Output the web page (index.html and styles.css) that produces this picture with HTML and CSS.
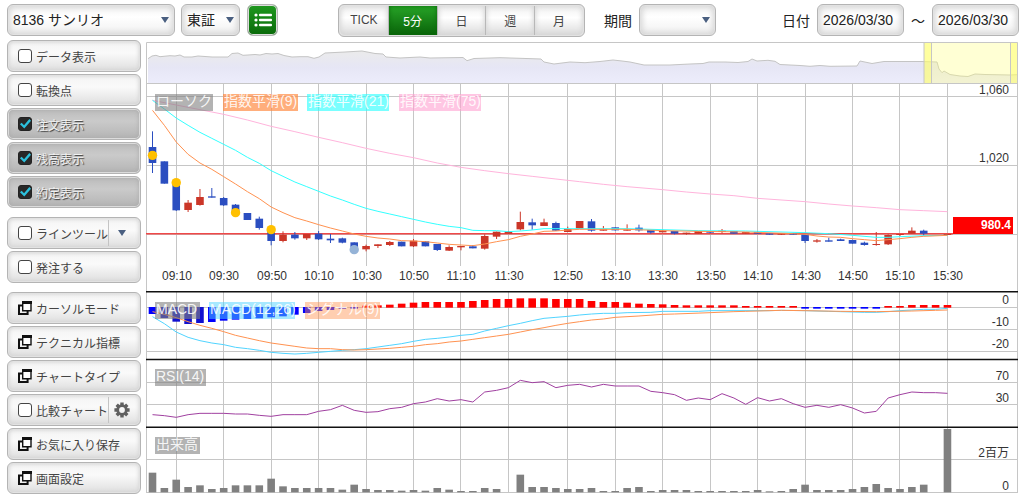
FILE: index.html
```html
<!DOCTYPE html>
<html lang="ja">
<head>
<meta charset="utf-8">
<meta name="viewport" content="width=device-width, initial-scale=1">
<title>8136 サンリオ チャート</title>
<link rel="stylesheet" href="styles.css">
</head>
<body>
<svg class="sprite" aria-hidden="true">
  <symbol id="windows" viewBox="0 0 14 14">
    <path d="M4.7 1h8.3v8.7H4.7z" fill="#fff" stroke="#111" stroke-width="1.4"/>
    <path d="M4 0h10v3H4z" fill="#111"/>
    <path d="M4 4.4H1V13h8.6V10" fill="none" stroke="#111" stroke-width="2"/>
  </symbol>
</svg>
<header class="toolbar">
  <span class="picker picker-issue"><select aria-label="銘柄"><option>8136 サンリオ</option></select></span>
  <span class="picker picker-market"><select aria-label="市場"><option>東証</option></select></span>
  <button class="list-button" type="button" aria-label="銘柄一覧">
    <svg viewBox="0 0 18 14" width="18" height="14" fill="#fff"><circle cx="2" cy="2" r="1.6"/><circle cx="2" cy="7" r="1.6"/><circle cx="2" cy="12" r="1.6"/><rect x="5" y="0.8" width="13" height="2.5" rx="1"/><rect x="5" y="5.8" width="13" height="2.5" rx="1"/><rect x="5" y="10.8" width="13" height="2.5" rx="1"/></svg>
  </button>
  <div class="periods">
    <button type="button">TICK</button>
    <button type="button" class="current">5分</button>
    <button type="button">日</button>
    <button type="button">週</button>
    <button type="button">月</button>
  </div>
  <label class="field-label" for="span">期間</label>
  <span class="picker picker-span"><select id="span"><option></option></select></span>
  <div class="dates">
    <label for="from">日付</label>
    <input id="from" type="text" value="2026/03/30">
    <span>～</span>
    <input type="text" aria-label="終了日" value="2026/03/30">
  </div>
</header>
<main class="workspace">
  <nav class="tools">
    <div class="tool-group">
      <label class="tool"><input type="checkbox">データ表示</label>
      <label class="tool"><input type="checkbox">転換点</label>
      <label class="tool on"><input type="checkbox" checked>注文表示</label>
      <label class="tool on"><input type="checkbox" checked>残高表示</label>
      <label class="tool on"><input type="checkbox" checked>約定表示</label>
    </div>
    <div class="tool-group">
      <div class="tool"><label><input type="checkbox">ラインツール</label><button class="more" type="button" aria-label="ラインツールメニュー"><svg width="8" height="6" viewBox="0 0 8 6"><path d="M0 0h8L4 6z" fill="#4a5f80"/></svg></button></div>
      <label class="tool"><input type="checkbox">発注する</label>
    </div>
    <div class="tool-group">
      <button class="tool" type="button"><svg class="icon"><use href="#windows"/></svg>カーソルモード</button>
      <button class="tool" type="button"><svg class="icon"><use href="#windows"/></svg>テクニカル指標</button>
      <button class="tool" type="button"><svg class="icon"><use href="#windows"/></svg>チャートタイプ</button>
      <div class="tool"><label><input type="checkbox">比較チャート</label><button class="more" type="button" aria-label="比較チャート設定"><svg width="16" height="16" viewBox="-8 -8 16 16"><g stroke="#606060" stroke-width="3.4"><path d="M0-7.6V-4M0 7.6V4M-7.6 0H-4M7.6 0H4M-5.3-5.3L-3-3M5.3 5.3L3 3M-5.3 5.3L-3 3M5.3-5.3L3-3"/></g><circle r="4.3" fill="none" stroke="#606060" stroke-width="2.8"/></svg></button></div>
      <button class="tool" type="button"><svg class="icon"><use href="#windows"/></svg>お気に入り保存</button>
      <button class="tool" type="button"><svg class="icon"><use href="#windows"/></svg>画面設定</button>
    </div>
  </nav>
  <svg id="chart" class="chart" viewBox="145 40 874 455" role="img" aria-label="株価チャート"></svg>
</main>
<script src="chart.js"></script>
</body>
</html>
```
FILE: styles.css
```css
* { box-sizing: border-box; }

body {
  margin: 0;
  padding: 4px 5px 4px 7px;
  background: #fff;
  color: #222;
  font-family: "Liberation Sans", "Noto Sans CJK JP", sans-serif;
  font-size: 14px;
}

button, input, select { font: inherit; color: inherit; }
button { cursor: pointer; }
.sprite { position: absolute; width: 0; height: 0; }

.toolbar { display: flex; align-items: center; height: 32px; margin-bottom: 4px; }

.picker { position: relative; margin-right: 6px; }
.picker::after {
  content: "";
  position: absolute;
  right: 6px;
  top: 13px;
  border: 4px solid transparent;
  border-top: 6px solid #4a5f80;
  border-bottom: 0;
  pointer-events: none;
}
.picker select, .dates input {
  appearance: none;
  width: 100%;
  height: 32px;
  padding: 0 5px;
  border: 1px solid #b4b4b4;
  border-radius: 6px;
  outline: 0;
  background: linear-gradient(#f2f2f2, #fff 40%, #f0f0f0);
  box-shadow: inset 0 0 0 1px #e2e2e2, inset 0 0 6px 2px #d2d2d2;
}
.picker-issue { width: 168px; }
.picker-market { width: 59px; margin-right: 7px; }
.picker-span { width: 77px; }

.list-button {
  display: flex;
  align-items: center;
  justify-content: center;
  width: 31px;
  height: 32px;
  margin-right: 60px;
  padding: 0;
  border: 1px solid #b4b4b4;
  border-radius: 6px;
  background: linear-gradient(#1f981f, #0a6a0a);
  box-shadow: inset 0 0 0 1px #ddd;
}

.periods {
  display: flex;
  width: 247px;
  height: 33px;
  margin-right: 19px;
  padding: 1px;
  border: 1px solid #b4b4b4;
  border-radius: 6px;
  background: #e2e2e2;
}
.periods button {
  flex: 1;
  padding: 0;
  border: 0;
  border-right: 1px solid #b8b8b8;
  background: linear-gradient(#f0f0f0, #fff 40%, #dcdcdc);
  box-shadow: inset 0 0 5px 1px #d6d6d6;
  color: #444;
  font-size: 12px;
}
.periods button:first-child { border-radius: 5px 0 0 5px; }
.periods button:last-child { border-right: 0; border-radius: 0 5px 5px 0; }
.periods .current {
  background: linear-gradient(#27a327, #096309);
  box-shadow: inset 0 0 4px #0a6a0a;
  color: #fff;
}

.field-label { margin-right: 7px; }
.dates { display: flex; align-items: center; gap: 7px; margin-left: auto; }
.dates input { width: 87px; }

.workspace { display: grid; grid-template-columns: 134px 1fr; gap: 4px; align-items: start; }
.tools { display: grid; gap: 9px; }
.tool-group { display: grid; gap: 2px; }

.tool {
  display: flex;
  align-items: center;
  width: 100%;
  height: 32px;
  padding: 0 0 0 10px;
  border: 1px solid #b4b4b4;
  border-radius: 6px;
  background: linear-gradient(#f4f4f4, #fafafa 40%, #dedede);
  box-shadow: inset 0 0 0 1px #e2e2e2, inset 0 0 4px 1px #d2d2d2;
  color: #444;
  font-size: 12px;
  text-align: left;
  white-space: nowrap;
}
.tool.on {
  background: linear-gradient(#bcbcbc, #cacaca 40%, #b4b4b4);
  box-shadow: inset 0 0 0 1px #dcdcdc, inset 0 0 4px 1px #aaa;
  color: #f2f2f2;
  text-shadow: 1px 1px 1px #333;
}
.tool label { display: flex; align-items: center; }
.tool input {
  appearance: none;
  flex: none;
  width: 14px;
  height: 14px;
  margin: 0 4px 0 0;
  border: 1px solid #444;
  border-radius: 3px;
  background: #fff;
}
.tool input:checked { border-color: #222; background: #282828; }
.tool input:checked::after {
  content: "";
  display: block;
  width: 12px;
  height: 12px;
  background: #2cc0dc;
  clip-path: polygon(8% 52%, 22% 40%, 42% 60%, 86% 8%, 100% 22%, 44% 88%);
}
.icon { flex: none; width: 14px; height: 14px; margin-right: 4px; }
.more {
  display: flex;
  align-items: center;
  justify-content: center;
  flex: 1;
  height: 26px;
  margin-left: auto;
  padding: 0 6px 0 0;
  border: 0;
  border-left: 1px solid #c4c4c4;
  background: none;
}
.tool label + .more { max-width: 32px; }

.chart { display: block; width: 100%; height: auto; }
.chart text { fill: #333; font-size: 12px; }
.chart .end { text-anchor: end; }
.chart .middle { text-anchor: middle; }
.chart .grid { stroke: #c6c6c6; fill: none; }
.chart .split { stroke: #111; stroke-width: 1.5; }
.chart .line { fill: none; stroke-width: 1; }
.chart .legend { fill: #fff; fill-opacity: 0.9; font-size: 14px; }
.chart .price { fill: #fff; font-size: 12px; font-weight: bold; }
```
FILE: chart.js
```js
const svg = document.getElementById("chart");
const NS = "http://www.w3.org/2000/svg";

function add(tag, attrs, text) {
  const el = document.createElementNS(NS, tag);
  for (const key in attrs) el.setAttribute(key, attrs[key]);
  if (text) el.textContent = text;
  svg.appendChild(el);
  return el;
}
const X = i => 152.5 + i * 11.865;
const priceY = v => 85 + v / 3;
const studyY = v => 285 + v / 3;
const grid = d => add("path", { d, class: "grid" });

// Overview strip
const overview = "148,58.7 152,56 156,55.3 160,56.7 170,55.7 175,56 180,55 184,57 192,57 198,56 212,57 228,57 232,53.5 238,53 243,55.3 248,55 255,54.5 260,55 266,53.5 272,54 278,53.5 284,55.5 292,57 300,56.7 308,56.7 314,58.3 319,57 325,53 345,52 362,51 375,53.5 383,54 386,57 400,58 420,57 430,58 463,57.5 467,60.7 474,58.5 500,57.7 520,58.3 541,59 544,62 554,64 570,62 585,62.7 600,61.5 613,60 622,61 630,62 644,65 670,65 690,64 703,63.5 709,62 725,62 738,62.5 748,61.5 752,59 757,61 768,60.3 775,61.3 780,64.5 800,65.5 810,66.3 820,65.5 830,66.3 857,66 860,61 872,63.5 884,61.5 900,61.5 922,61.5 937,62 939,69 942,72.7 944,71 950,74.5 960,76 968,76.5 975,74 985,74.5 1010,75 1017,74.7";
const defs = add("defs", {});
defs.innerHTML = '<linearGradient id="haze" x1="0" y1="0" x2="0" y2="1"><stop offset="0" stop-color="#ebebeb"/><stop offset=".5" stop-color="#e6e6f5"/><stop offset="1" stop-color="#ededfc"/></linearGradient>';
add("polygon", { points: "148,83.5 " + overview + " 1017,83.5", fill: "url(#haze)" });
add("polyline", { points: overview, fill: "none", stroke: "#c4c4c4" });
add("rect", { x: 924, y: 42, width: 93, height: 41, fill: "#ffff80", "fill-opacity": 0.34 });
add("rect", { x: 924, y: 42, width: 7, height: 41, fill: "#ffff60", "fill-opacity": 0.45 });
add("rect", { x: 1011, y: 42, width: 7, height: 41, fill: "#ffff60", "fill-opacity": 0.45 });
grid("M924 42V83M931.5 42V83M1010.5 42V83");
grid("M146.5 493V42.5H1017.5V493");
grid("M146 83.5H1018");

// Grid and time axis
const ticks = [[2, "09:10"], [6, "09:30"], [10, "09:50"], [14, "10:10"], [18, "10:30"], [22, "10:50"], [26, "11:10"], [30, "11:30"], [35, "12:50"], [39, "13:10"], [43, "13:30"], [47, "13:50"], [51, "14:10"], [55, "14:30"], [59, "14:50"], [63, "15:10"], [67, "15:30"]];
for (const [i, label] of ticks) {
  const x = Math.floor(X(i)) + 0.5;
  grid(`M${x} 84V266M${x} 292V493`);
  add("text", { x: x + 0.5, y: 280, class: "middle" }, label);
}
for (const y of [96.5, 165.5, 234.5, 307.5, 329.5, 351.5, 382.5, 404.5, 459.5, 492.5]) grid(`M146 ${y}H1018`);
add("path", { d: "M146 233.8H953", stroke: "#f04848", "stroke-width": 1.6 });

// Candles: index, colour, high, body top, body bottom, low
const candles = [
  [0,"b",139,186,234,264],[1,"b",229,229,296,296],[2,"b",297,297,376,378],[3,"r",345,353,375,381],[4,"r",312,336,360,362],[5,"b",309,334,338,338],[6,"b",336,339,361,363],[7,"b",357,359,384,384],[8,"b",384,384,405,405],[9,"b",395,401,429,434],
  [10,"b",440,440,468,481],[11,"r",439,449,468,472],[12,"b",441,449,460,464],[13,"r",447,447,460,465],[14,"b",438,446,463,465],[15,"b",447,461,466,474],[16,"b",458,460,473,475],[17,"b",472,472,487,487],[18,"r",479,483,493,499],[19,"r",478,478,483,489],
  [20,"r",468,471,480,483],[21,"b",470,470,484,484],[22,"r",462,467,484,486],[23,"b",469,469,484,484],[24,"b",477,477,495,498],[25,"r",481,486,497,498],[26,"r",483,483,487,496],[27,"b",480,484,490,490],[28,"r",448,453,491,494],[29,"r",440,440,455,462],
  [30,"r",438,439,446,446],[31,"r",380,411,433,436],[32,"b",401,412,421,434],[33,"r",401,412,423,423],[34,"b",410,414,437,438],[35,"r",425,432,441,441],[36,"r",408,408,431,431],[37,"b",402,409,437,440],[38,"r",423,432,437,437],[39,"b",427,427,436,437],
  [40,"r",418,433,437,437],[41,"b",419,428,436,440],[42,"b",435,435,443,446],[43,"r",434,437,442,442],[44,"b",438,438,446,448],[45,"r",443,443,447,449],[46,"r",438,438,446,446],[47,"b",438,438,443,445],[48,"r",432,437,441,445],[49,"b",438,438,446,446],
  [50,"r",441,441,446,446],[51,"b",438,441,446,446],[52,"b",445,445,449,449],[53,"r",445,445,449,450],[54,"b",445,445,449,449],[55,"b",448,448,468,474],[56,"r",462,466,470,473],[57,"b",458,466,470,470],[58,"b",461,463,468,468],[59,"b",464,465,476,476],
  [60,"b",470,473,480,482],[61,"r",441,477,480,482],[62,"r",448,450,478,480],[63,"r",447,447,450,453],[64,"r",427,437,446,446],[65,"b",434,437,446,452],[67,"r",447,447,450,450]
];
for (const [i, c, high, top, bottom, low] of candles) {
  const color = c === "b" ? "#2b4ec0" : "#cb3628";
  add("path", { d: `M${X(i)} ${priceY(high)}V${priceY(low)}`, stroke: color });
  add("rect", { x: X(i) - 3.8, y: priceY(top), width: 7.6, height: (bottom - top) / 3, fill: color });
}

// Each line is a flat list of index, value pairs
function line(pairs, y, stroke) {
  let points = "";
  for (let k = 0; k < pairs.length; k += 2) points += `${X(pairs[k])},${y(pairs[k + 1])} `;
  add("polyline", { points, class: "line", stroke });
}
const run = values => values.flatMap((v, i) => [i, v]);

line([0,46,2,60,4,74,6,88,8,105,10,124,12,140,14,157,16,173,18,190,20,205,22,218,24,234,26,247,28,257,30,266,32,274,34,282,36,290,38,298,40,305,43,314,45,321,47,327,49,332,51,340,55,350,57,357,59,363,61,368,63,374,65,377,67,380], priceY, "#ffb4dc");
line(run([46,72,99,121,142,160,178,196,217,235,257,274,291,305,319,333,345,358,370,379,387,395,403,411,418,424,428,436,437,437,440,438,435,431,431]).concat([40,431,46,437,50,438,55,443,57,446,59,451,61,457,62,457,63,455,65,452,67,451]), priceY, "#3ff");
line(run([76,121,171,208,234,253,275,297,320,341,366,383,398,408,419,429,438,447,454,459,462,467,468,470,474,478,480,482,477,470,464,454,447,439,438,435,433]).concat([40,433,43,437,46,439,50,441,54,446,55,448,56,453,57,456,58,457,59,461,60,464,61,467,62,464,63,461,64,457,65,454,67,451]), priceY, "#ff9250");

for (const [i, y, fill] of [[0,211,"#ffc000"],[2,293,"#ffc000"],[7,383,"#ffc000"],[10,434,"#ffc000"],[17,494,"#95b3d7"]])
  add("circle", { cx: X(i), cy: priceY(y), r: 4.7, fill });

// MACD histogram
const histogram = [87,99,110,117,114,111,107,104,102,100,97,94,89,84,78,75,71,71,62,61,59,56,53,51,51,51,51,48,45,42,42,40,40,40,42,42,42,48,51,51,53,56,57,58,60,61,61,61,61,61,63,63,63,63,63,71,71,71,71,71,71,71,63,63,60,60,60,60];
histogram.forEach((v, i) => {
  const below = v > 67;
  add("rect", { x: X(i) - 3.8, y: below ? studyY(66) : studyY(v), width: 7.6, height: below ? (v - 66) / 3 : (68 - v) / 3, fill: below ? (i > 0 && i < 5 ? "#1010d0" : "#00f") : "#f00" });
});
line(run([95,116,141,157,167,174,179,187,191,196,202,205,207,205,202,199,196,194,191,186,181,176,169,163,160,156,151,148,138,130,122,115,107,100,97,94,90,87,85,85,83]).concat([42,82,43,79,46,79,47,77,52,77,53,76,55,77,57,79,60,82,61,82,62,80,63,77,64,75,65,73,66,73,67,70]), studyY, "#50d4ff");
line(run([80,88,98,110,121,130,140,151,159,167,174,179,184,189,191,191,194,195,194,192,190,187,184,179,176,171,168,163,158,153,148,141,134,128,121,115,110,105,102,97]).concat([41,93,43,88,44,87,47,83,49,80,50,79,53,76,55,77,58,79,61,80,64,78,66,76,67,75]), studyY, "#ff9250");

line(run([389,392,397,389,385,385,385,387,387,391,394,389,389,389,379,374,361,376,382,380,371,367,356,351,341,348,344,351,321,316,308,286,293,290,308,301,298,306,298,303,303,303,319,323,329,346,339,344,326,339,358,338,348,341,356,367,361,367,359,369,384,379,339,329,321,323,323,325]), studyY, "#a040a0");

// Volume
[563,609,584,606,601,612,609,601,601,601,581,604,609,609,609,609,614,599,612,615,615,617,615,617,609,614,618,618,609,612,622,569,606,606,609,612,612,609,618,618,609,606,618,615,615,615,618,618,618,618,618,615,619,618,612,599,615,615,615,612,606,597,609,612,606,599,622,432].forEach((v, i) =>
  add("rect", { x: X(i) - 3.8, y: studyY(v), width: 7.6, height: (622 - v) / 3, fill: "#808080" }));

for (const y of [291.8, 359.5, 427.2]) add("path", { d: `M146 ${y}H1018`, class: "split" });

// Legends: x, y, width, fill, opacity, text
for (const [x, y, width, fill, opacity, text] of [
  [155, 94, 58, "#808080", 0.6, "ローソク"], [223, 94, 75, "#ff8b45", 0.7, "指数平滑(9)"], [307, 94, 82, "#3ff", 0.65, "指数平滑(21)"], [399, 94, 82, "#ffa0d0", 0.6, "指数平滑(75)"],
  [155, 302, 45, "#808080", 0.6, "MACD"], [209, 302, 86, "#50d4ff", 0.5, "MACD(12,26)"], [305, 302, 75, "#ff9250", 0.45, "シグナル(9)"],
  [155, 369, 51, "#808080", 0.6, "RSI(14)"], [155, 437, 45, "#808080", 0.6, "出来高"]
]) {
  add("rect", { x, y, width, height: 17, fill, "fill-opacity": opacity });
  add("text", { x: x + 1, y: y + 12, class: "legend" }, text);
}

// Value axis
for (const [y, text] of [[94, "1,060"], [162, "1,020"], [304, "0"], [326, "-10"], [348, "-20"], [380, "70"], [402, "30"], [457, "2百万"], [490, "0"]])
  add("text", { x: 1009, y, class: "end" }, text);
add("rect", { x: 953, y: 217, width: 60, height: 17, fill: "#f00" });
add("text", { x: 1011, y: 229, class: "price end" }, "980.4");
```
